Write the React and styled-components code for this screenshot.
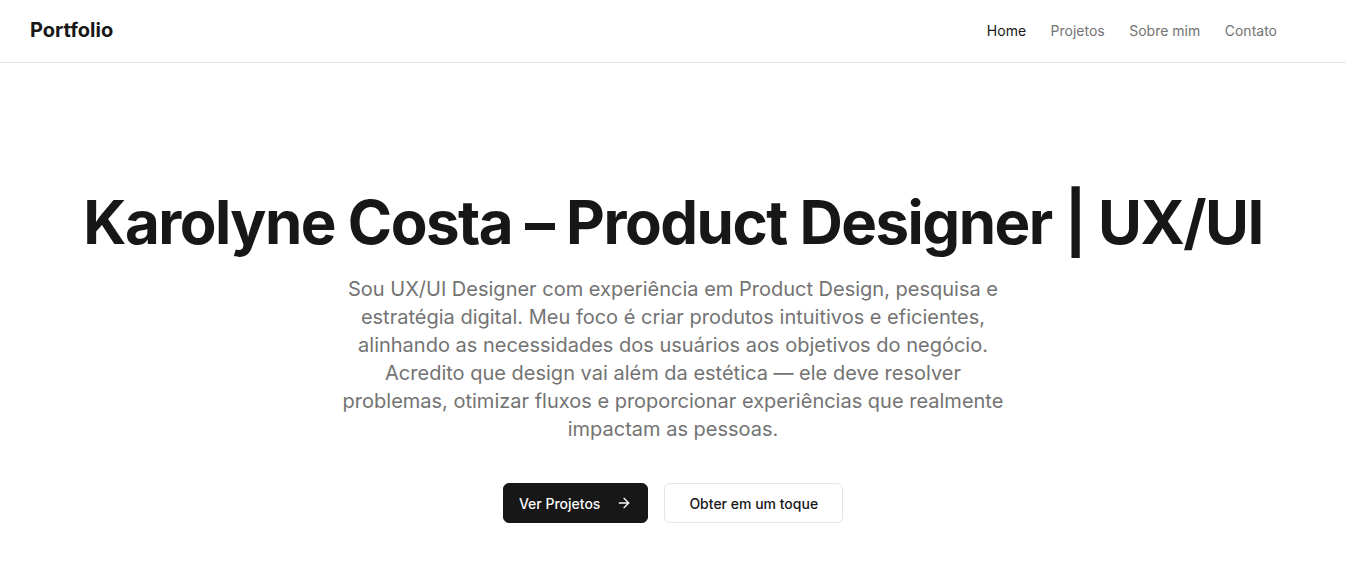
import React from "react";
import styled, { createGlobalStyle } from "styled-components";

const GlobalStyle = createGlobalStyle`
  * {
    box-sizing: border-box;
  }
  body {
    margin: 0;
    background: #ffffff;
    font-family: Inter, "Noto Sans", sans-serif;
    color: #171717;
  }
`;

const Header = styled.header`
  height: 63px;
  border-bottom: 1px solid #e5e5e5;
  display: flex;
  align-items: center;
  justify-content: space-between;
  padding: 0 69px 2px 30px;
`;

const Logo = styled.div`
  font-size: 20px;
  font-weight: 700;
  color: #171717;
`;

const Nav = styled.nav`
  display: flex;
  gap: 24.5px;
`;

const NavLink = styled.a`
  font-size: 14px;
  color: ${({ $active }) => ($active ? "#171717" : "#737373")};
  text-decoration: none;
  cursor: pointer;
`;

const Hero = styled.main`
  padding-top: 129px;
  display: flex;
  flex-direction: column;
  align-items: center;
  text-align: center;
`;

const Title = styled.h1`
  margin: 0 0 23px;
  font-size: 60px;
  line-height: 1;
  font-weight: 700;
  letter-spacing: -0.025em;
  color: #171717;
`;

const Lead = styled.p`
  margin: 0;
  max-width: 672px;
  font-size: 20px;
  line-height: 28px;
  color: #737373;
`;

const Actions = styled.div`
  margin-top: 40px;
  display: flex;
  gap: 16px;
`;

const Button = styled.button`
  height: 40px;
  padding: 0 ${({ $primary }) => ($primary ? "15px" : "24px")};
  border-radius: 6px;
  font-family: inherit;
  font-size: 14px;
  font-weight: 500;
  display: inline-flex;
  align-items: center;
  gap: 16px;
  cursor: pointer;
  background: ${({ $primary }) => ($primary ? "#171717" : "#ffffff")};
  color: ${({ $primary }) => ($primary ? "#fafafa" : "#171717")};
  border: 1px solid ${({ $primary }) => ($primary ? "#171717" : "#e5e5e5")};
  box-shadow: ${({ $primary }) => ($primary ? "none" : "0 1px 2px rgba(0,0,0,0.04)")};
`;

const Arrow = () => (
  <svg width="16" height="16" viewBox="0 0 24 24" fill="none" stroke="currentColor" strokeWidth="2" strokeLinecap="round" strokeLinejoin="round">
    <path d="M5 12h14" />
    <path d="m12 5 7 7-7 7" />
  </svg>
);

const links = ["Home", "Projetos", "Sobre mim", "Contato"];

const App = () => {
  return (
    <>
      <GlobalStyle />
      <Header>
        <Logo>Portfolio</Logo>
        <Nav>
          {links.map((l, i) => (
            <NavLink key={l} $active={i === 0}>
              {l}
            </NavLink>
          ))}
        </Nav>
      </Header>
      <Hero>
        <Title>Karolyne Costa – Product Designer | UX/UI</Title>
        <Lead>
          Sou UX/UI Designer com experiência em Product Design, pesquisa e
          estratégia digital. Meu foco é criar produtos intuitivos e eficientes,
          alinhando as necessidades dos usuários aos objetivos do negócio.
          Acredito que design vai além da estética — ele deve resolver
          problemas, otimizar fluxos e proporcionar experiências que realmente
          impactam as pessoas.
        </Lead>
        <Actions>
          <Button $primary>
            Ver Projetos
            <Arrow />
          </Button>
          <Button>Obter em um toque</Button>
        </Actions>
      </Hero>
    </>
  );
};

export default App;
